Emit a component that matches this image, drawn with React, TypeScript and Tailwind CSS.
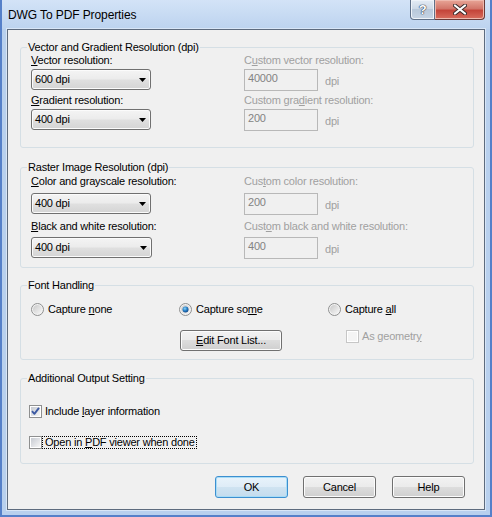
import type { ReactNode } from 'react';

const grayText = 'text-[#a0a0a0]';

function Combo({ value, className = '', wide = false }: { value: string; className?: string; wide?: boolean }) {
  return (
    <div
      className={`flex h-[21px] ${wide ? 'w-[121px]' : 'w-[120px]'} items-center justify-between rounded-[3px] border border-[#707070] bg-[linear-gradient(#f4f4f4,#ececec_45%,#dfdfdf_55%,#d4d4d4)] pl-[3px] pr-[4px] shadow-[inset_0_0_0_1px_#fbfbfb] ${className}`}
    >
      <span>{value}</span>
      <svg width="7" height="4" viewBox="0 0 7 4">
        <path d="M0 0h7L3.5 4z" fill="#000" />
      </svg>
    </div>
  );
}

function DisabledInput({ value }: { value: string }) {
  return (
    <div className="h-[22px] w-[74px] border border-[#b8b8b8] bg-[#f0f0f0] pl-[3px] pt-[2px] text-[#838383]">{value}</div>
  );
}

function Radio({ checked = false }: { checked?: boolean }) {
  return (
    <svg width="13" height="13" viewBox="0 0 13 13" className="shrink-0">
      <defs>
        <linearGradient id="radioBg" x1="0" y1="0" x2="1" y2="1">
          <stop offset="0" stopColor="#c9c9c9" />
          <stop offset="1" stopColor="#f7f7f7" />
        </linearGradient>
        <radialGradient id="radioDot" cx="0.4" cy="0.35" r="0.7">
          <stop offset="0" stopColor="#8fd4f7" />
          <stop offset="0.5" stopColor="#2a83c9" />
          <stop offset="1" stopColor="#0c3f80" />
        </radialGradient>
      </defs>
      <circle cx="6.5" cy="6.5" r="6" fill="#f2f2f2" stroke="#8e8f8f" />
      <circle cx="6.5" cy="6.5" r="4.5" fill="url(#radioBg)" />
      {checked && <circle cx="6.5" cy="6.5" r="3" fill="url(#radioDot)" />}
    </svg>
  );
}

function Check({ checked = false, disabled = false }: { checked?: boolean; disabled?: boolean }) {
  return (
    <svg width="13" height="13" viewBox="0 0 13 13" className="shrink-0">
      <defs>
        <linearGradient id="checkBg" x1="0" y1="0" x2="1" y2="1">
          <stop offset="0" stopColor="#c6cad1" />
          <stop offset="1" stopColor="#f6f6f6" />
        </linearGradient>
      </defs>
      <rect x="0.5" y="0.5" width="12" height="12" fill="#fff" stroke={disabled ? '#c6c6c6' : '#8e8f8f'} />
      <rect x="2" y="2" width="9" height="9" fill={disabled ? '#f4f4f4' : 'url(#checkBg)'} />
      {checked && (
        <path d="M3 6.2 L5.4 8.8 L10 2.8" fill="none" stroke="#3d5aa3" strokeWidth="1.9" strokeLinejoin="round" />
      )}
    </svg>
  );
}

function Button({ children, className = '', isDefault = false }: { children: ReactNode; className?: string; isDefault?: boolean }) {
  return (
    <div
      className={`flex items-center justify-center rounded-[3px] border ${
        isDefault
          ? 'border-[#3c8fd0] bg-[linear-gradient(#e8f3fb,#deecf7_50%,#cfe3f1_50%,#c4dcee)] shadow-[inset_0_0_0_1px_#a8dcf6]'
          : 'border-[#707070] bg-[linear-gradient(#f2f2f2,#ebebeb_50%,#dddddd_50%,#cfcfcf)] shadow-[inset_0_0_0_1px_#fcfcfc]'
      } ${className}`}
    >
      {children}
    </div>
  );
}

function Group({ title, className, inner, children }: { title: string; className: string; inner: string; children: ReactNode }) {
  return (
    <fieldset className={`ml-[12px] w-[454px] rounded-[3px] border border-[#d5dfe5] ${className}`}>
      <legend className="ml-[6px] px-px">{title}</legend>
      <div className={inner}>{children}</div>
    </fieldset>
  );
}

function ResolutionRow({
  label,
  customLabel,
  value,
  custom,
  gap,
  className = '',
  wide = false,
}: {
  label: ReactNode;
  customLabel: ReactNode;
  value: string;
  custom: string;
  gap: string;
  className?: string;
  wide?: boolean;
}) {
  return (
    <div className={`flex ${className}`}>
      <div className="w-[213px]">
        <div>{label}</div>
        <Combo value={value} className={gap} wide={wide} />
      </div>
      <div>
        <div className={grayText}>{customLabel}</div>
        <div className={`flex items-start ${gap}`}>
          <DisabledInput value={custom} />
          <span className={`ml-[7px] mt-[6px] ${grayText}`}>dpi</span>
        </div>
      </div>
    </div>
  );
}

export default function App() {
  return (
    <div className="flex h-[517px] w-[492px] flex-col border-x-2 border-b-2 border-[#5580c9] bg-[#b8d0ee] font-['Liberation_Sans',Arial,sans-serif] text-[11px] leading-[13px] tracking-[-0.2px] text-black">
      {/* title bar */}
      <div className="flex h-[29px] shrink-0 items-start bg-[linear-gradient(#d3e3f7,#bcd3ef)] pl-[6px] pr-[5px]">
        <span className="mt-[8px] text-[12px] leading-[14px] tracking-[-0.1px]">DWG To PDF Properties</span>
        <div className="ml-auto flex">
          <div className="flex h-[20px] w-[25px] items-center justify-center rounded-bl-[4px] border border-t-0 border-[#5f7088] bg-[linear-gradient(#e4ecf5,#cbd7e5_50%,#b8c8da_50%,#c6d4e4)] shadow-[inset_0_0_0_1px_#eef3f9]">
            <span className="text-[13px] font-bold leading-[13px] text-white [text-shadow:0_0_1px_#2c3b52,0_0_1px_#2c3b52,0_0_1px_#2c3b52]">?</span>
          </div>
          <div className="flex h-[20px] w-[50px] items-center justify-center rounded-br-[4px] border border-l-0 border-t-0 border-[#6a3a38] bg-[linear-gradient(#e8a597,#d2766a_45%,#c4453a_55%,#d86d5e)] shadow-[inset_0_0_0_1px_#eeb9ae]">
            <svg width="14" height="11" viewBox="0 0 14 11">
              <path d="M2 1.5 L12 9.5 M12 1.5 L2 9.5" stroke="#3a2a2a" strokeWidth="4" strokeLinecap="round" />
              <path d="M2 1.5 L12 9.5 M12 1.5 L2 9.5" stroke="#fff" strokeWidth="2.2" strokeLinecap="round" />
            </svg>
          </div>
        </div>
      </div>

      {/* client area */}
      <div className="mx-[5px] h-[481px] shrink-0 border border-[#5d6b7e] bg-[#f0f0f0] shadow-[0_0_0_1px_#d8e6f7]">
        <Group title="Vector and Gradient Resolution (dpi)" className="mt-[11px] pb-[16px]" inner="pl-[10px]">
          <ResolutionRow
            label={<><u>V</u>ector resolution:</>}
            customLabel={<>C<u>u</u>stom vector resolution:</>}
            value="600 dpi"
            custom="40000"
            gap="mt-[2px]"
          />
          <ResolutionRow
            className="mt-[3px]"
            label={<><u>G</u>radient resolution:</>}
            customLabel={<>Custom gra<u>d</u>ient resolution:</>}
            value="400 dpi"
            custom="200"
            gap="mt-[2px]"
          />
        </Group>

        <Group title="Raster Image Resolution (dpi)" className="mt-[13px] pb-[8px]" inner="pl-[10px]">
          <ResolutionRow
            className="mt-[1px]"
            label={<><u>C</u>olor and grayscale resolution:</>}
            customLabel={<>Cus<u>t</u>om color resolution:</>}
            value="400 dpi"
            custom="200"
            gap="mt-[5px]"
          />
          <ResolutionRow
            className="mt-[5px]"
            label={<><u>B</u>lack and white resolution:</>}
            customLabel={<>Cust<u>o</u>m black and white resolution:</>}
            value="400 dpi"
            custom="400"
            gap="mt-[4px]"
            wide
          />
        </Group>

        <Group title="Font Handling" className="mt-[11px] pb-[8px]" inner="pl-[10px]">
          <div className="mt-[11px] flex">
            <div className="flex w-[148px] items-center">
              <Radio />
              <span className="ml-[4px]">Capture <u>n</u>one</span>
            </div>
            <div className="flex w-[149px] items-center">
              <Radio checked />
              <span className="ml-[4px]">Capture so<u>m</u>e</span>
            </div>
            <div className="flex items-center">
              <Radio />
              <span className="ml-[4px]">Capture <u>a</u>ll</span>
            </div>
          </div>
          <div className="mt-[14px] flex items-start">
            <Button className="ml-[149px] h-[21px] w-[102px]">
              <span><u>E</u>dit Font List...</span>
            </Button>
            <div className="ml-[64px] flex items-center">
              <Check disabled />
              <span className={`ml-[3px] ${grayText}`}>As geometr<u>y</u></span>
            </div>
          </div>
        </Group>

        <Group title="Additional Output Setting" className="mt-[12px] pb-[14px]" inner="pl-[8px]">
          <div className="mt-[20px] flex items-center">
            <Check checked />
            <span className="ml-[3px]">Include <u>l</u>ayer information</span>
          </div>
          <div className="mt-[18px] flex items-center">
            <Check />
            <span className="border border-dotted border-black pl-[2px] pr-px leading-[11px]">
              Open in <u>P</u>DF viewer when done
            </span>
          </div>
        </Group>

        <div className="mt-[12px] flex justify-end pr-[19px]">
          <Button isDefault className="h-[22px] w-[73px]">OK</Button>
          <Button className="ml-[15px] h-[22px] w-[73px]">Cancel</Button>
          <Button className="ml-[16px] h-[22px] w-[73px]">Help</Button>
        </div>
      </div>
    </div>
  );
}
